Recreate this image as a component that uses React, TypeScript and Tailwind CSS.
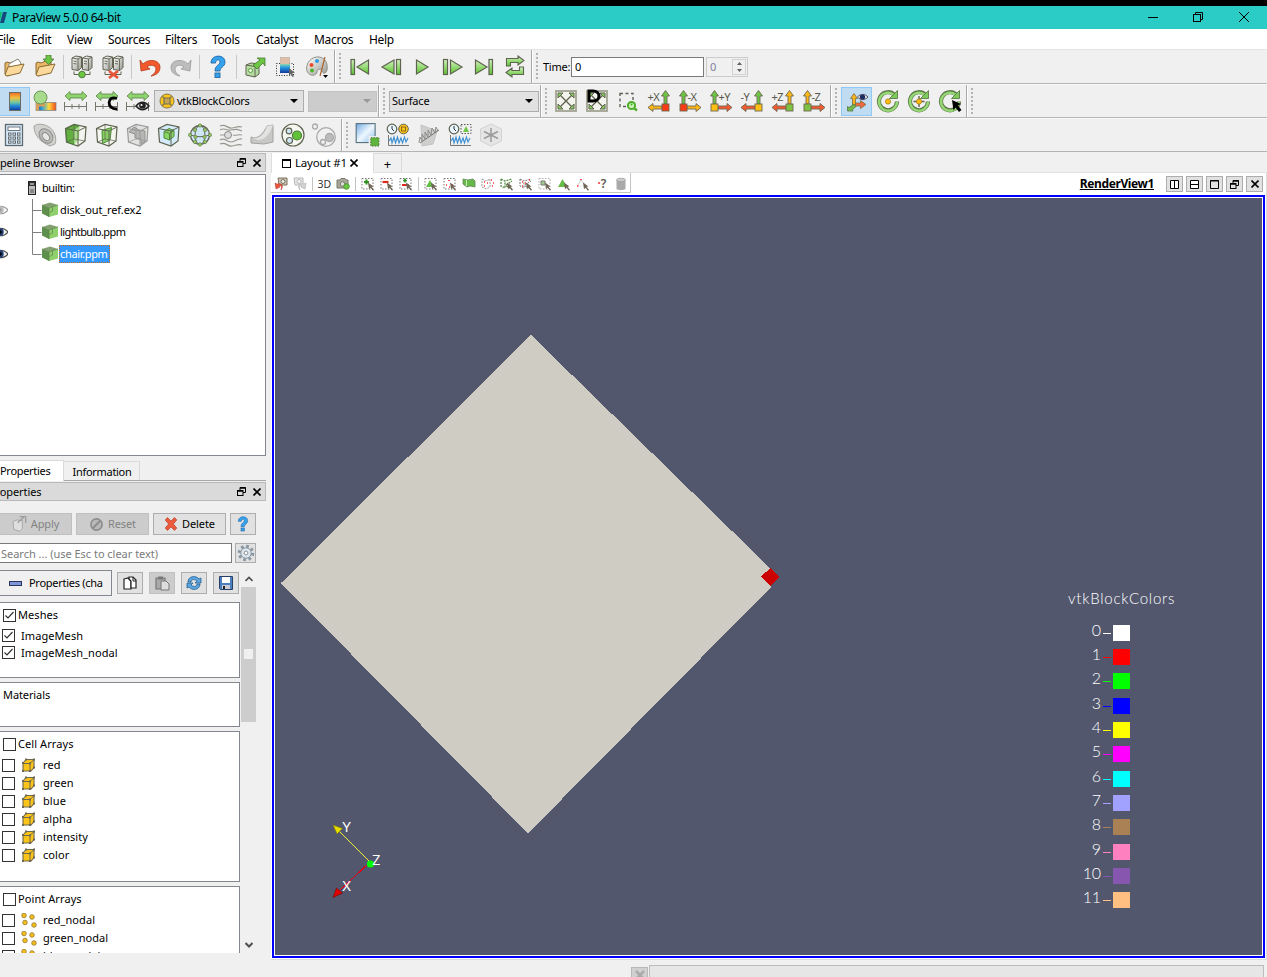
import React from "react";

type Kids = { children?: React.ReactNode };

const G = "#6cc644";
const O = "#5f6350";

function Svg({ s = 24, vb = 24, children, dim = false }: Kids & { s?: number; vb?: number; dim?: boolean }) {
  return (
    <svg width={s} height={s} viewBox={`0 0 ${vb} ${vb}`} fill="none" opacity={dim ? 0.55 : 1} className="shrink-0">
      {children}
    </svg>
  );
}

function Defs() {
  return (
    <svg width="0" height="0" className="absolute">
      <defs>
        <linearGradient id="green" x1="0" y1="0" x2="0" y2="1"><stop offset="0" stopColor="#d2f2c0" /><stop offset="1" stopColor="#5cc32f" /></linearGradient>
        <linearGradient id="metal" x1="0" y1="0" x2="1" y2="1"><stop offset="0" stopColor="#ffffff" /><stop offset="1" stopColor="#9a9a92" /></linearGradient>
        <linearGradient id="rainbow" x1="0" y1="0" x2="0" y2="1"><stop offset="0" stopColor="#f06a20" /><stop offset=".3" stopColor="#f0c040" /><stop offset=".55" stopColor="#70c8a0" /><stop offset=".75" stopColor="#1f86d8" /><stop offset="1" stopColor="#12389c" /></linearGradient>
        <linearGradient id="cool" x1="0" y1="0" x2="0" y2="1"><stop offset="0" stopColor="#8fd8b0" /><stop offset=".4" stopColor="#2496e0" /><stop offset="1" stopColor="#12389c" /></linearGradient>
        <linearGradient id="rainbowH"><stop offset="0" stopColor="#2040a0" /><stop offset=".3" stopColor="#30a0d8" /><stop offset=".65" stopColor="#ffd840" /><stop offset="1" stopColor="#f04818" /></linearGradient>
        <linearGradient id="blue" x1="0" y1="0" x2="1" y2="1"><stop offset="0" stopColor="#6fabe0" /><stop offset=".5" stopColor="#eef7ff" /><stop offset="1" stopColor="#8dbde8" /></linearGradient>
      </defs>
    </svg>
  );
}

const Slot = ({ children, on = false }: Kids & { on?: boolean }) => (
  <div className={on ? "w-[31px] h-[29px] shrink-0 flex items-center justify-center bg-[#c0dcf3] border border-[#90c8f6]" : "w-[31px] shrink-0 flex items-center justify-center"}>{children}</div>
);
const Sep = () => <div className="w-1.5 shrink-0 flex justify-center"><div className="w-px h-6 bg-[#c8c8c8]" /></div>;
const Grip = () => (
  <div className="w-[12px] self-stretch shrink-0 flex items-center">
    <div className="self-stretch w-[2px] border-l border-[#a8a8a8] bg-white" />
    <div className="ml-[3px] h-[27px] w-[2px] bg-[repeating-linear-gradient(180deg,#b4b4b4_0_2px,#f0f0f0_2px_4px)]" />
  </div>
);

/* ---------- file / edit icons ---------- */
const Folder = ({ save = false }: { save?: boolean }) => (
  <Svg>
    <path d="M3 8l2-1 3 1 7-3 3 2v5L6 21l-3-2z" fill="#e9b765" stroke="#8a6b35" />
    {!save && <path d="M7 9l9-5 3 4-2 5-10 3z" fill="#fff" stroke="#8b8b84" />}
    <path d="M3 20l3-8 16-3-4 9-13 3z" fill="#fbd99a" stroke="#8a6b35" />
    {save && <path d="M13 0h5v4h3l-5.500 5.500L10 4h3z" fill={G} stroke="#4a7a35" strokeWidth=".8" />}
  </Svg>
);
const Servers = ({ off = false }: { off?: boolean }) => (
  <Svg>
    {[2, 12.5].map((x) => (
      <g key={x}>
        <path d={`M${x} 3l4-2 5.500 1v10.500l-3 3-6.500-1z`} fill="url(#metal)" stroke={O} strokeWidth="1" />
        <path d={`M${x} 3l6 1 3.500-2M${x + 6} 4v11M${x + 1.5} 6l3 .5M${x + 1.5} 8.500l3 .5`} stroke={O} strokeWidth=".9" />
      </g>
    ))}
    <path d="M4 16.500v3h16v-3" stroke={O} />
    {off ? <path d="M8 16l9 7M17 16l-9 7" stroke="#e8553a" strokeWidth="2.600" /> : <circle cx="12" cy="19.500" r="3.300" fill={G} stroke="#4d7a3a" />}
  </Svg>
);
const Undo = ({ redo = false }: { redo?: boolean }) => (
  <Svg>
    <g transform={redo ? "translate(24 0) scale(-1 1)" : undefined}>
      <path d="M2 5l1 11 9-2-3-2c3-3 9-2 9 2 0 3-2 5-5 7 6-1 9-4 9-9 0-7-11-9-17-3z" fill={redo ? "#bdbdbd" : "#f2592c"} stroke={redo ? "#9a9a9a" : "#b43a18"} strokeWidth=".8" />
    </g>
  </Svg>
);
const Question = ({ s = 24 }: { s?: number }) => (
  <Svg s={s}>
    <path d="M5 8c0-9 14-9 14-1 0 5-5 5-5 9H9c0-6 5-6 5-9 0-3-4-3-4.500 1z" fill="#35a2ee" stroke="#2467a4" strokeWidth=".9" />
    <rect x="9" y="18" width="5" height="4.500" fill="#35a2ee" stroke="#2467a4" strokeWidth=".9" />
  </Svg>
);
const CubeArrow = () => (
  <Svg>
    <path d="M3 10l5-2 8 1v10l-4 3-9-2z" fill="#b6dba2" stroke={O} />
    <path d="M3 10l9 1.500 4-2.500M12 11.500V22" stroke={O} />
    <circle cx="7.500" cy="15.500" r="2" fill="#e8f7de" stroke="#5b9b3c" />
    <path d="M10 10l7-5-3-2h8v8l-2-3-6 6z" fill={G} stroke="#4a7a35" strokeWidth=".8" />
  </Svg>
);
const Selector = () => (
  <Svg>
    <rect x="2.500" y="8.500" width="17" height="12" stroke="#333" strokeDasharray="1 1.500" />
    <rect x="6.500" y="2.500" width="9" height="7" fill="#e0bfa8" stroke="#b8a898" strokeWidth=".6" />
    <rect x="6" y="9" width="10" height="9" fill="url(#cool)" />
    <path d="M15 13l6 5-3 .3 2 3-1.500.7-1.700-3-1.800 2z" fill="#666" />
  </Svg>
);
const Palette = () => (
  <Svg>
    <path d="M2 16C0 8 7 1 14 2c7 1 9 7 8 13-1 4-4 4-5 1s-5-2-5 1-7 6-10-1z" fill="url(#metal)" stroke="#8f8f88" />
    <circle cx="6.500" cy="10" r="2" fill="#f04a28" /><circle cx="12" cy="6" r="2" fill="#2e9be6" /><circle cx="7" cy="15.500" r="2" fill="#4db52a" />
    <path d="M20 2l-5 19" stroke="#a86432" strokeWidth="1.200" />
    <path d="M18 20h5l-2.500 3z" fill="#000" />
  </Svg>
);

/* ---------- playback ---------- */
const Play = ({ k }: { k: "first" | "prev" | "play" | "next" | "last" }) => (
  <Svg>
    <g fill="url(#green)" stroke={O} strokeWidth="1.200">
      {k === "first" && <><rect x="3" y="4.500" width="3.500" height="15" /><path d="M20.500 5v14L9 12z" /></>}
      {k === "prev" && <><rect x="17.500" y="4.500" width="4" height="15" /><path d="M15 5v14L3 12z" /></>}
      {k === "play" && <path d="M6.500 5v14l11.500-7z" />}
      {k === "next" && <><rect x="2.500" y="4.500" width="4" height="15" /><path d="M9.500 5v14l11.500-7z" /></>}
      {k === "last" && <><rect x="17" y="4.500" width="3.500" height="15" /><path d="M3.500 5v14L15 12z" /></>}
    </g>
  </Svg>
);
const Loop = () => (
  <Svg>
    <g fill="url(#green)" stroke={O} strokeWidth="1.100">
      <path d="M3.500 11V3.500H15V1l6 4.500-6 4.500V7.500H7.500V11z" />
      <path d="M20.500 12v7.500H9V22l-6-4.500L9 13v2.500h7.500V12z" />
    </g>
  </Svg>
);

/* ---------- color toolbar ---------- */
const ColorBar = () => <Svg><rect x="6.500" y="3.500" width="11" height="18" fill="url(#rainbow)" stroke="#6c6c64" /></Svg>;
const EditMap = () => (
  <Svg>
    <rect x="3" y="13.500" width="20" height="8" fill="url(#rainbowH)" stroke="#8c8c84" strokeWidth=".8" />
    <path d="M3 21.500v-8h9v4H6v4z" fill="#d6a05a" />
    <circle cx="7.500" cy="8.500" r="6.500" fill="#a8dc8c" stroke="#6a9658" />
  </Svg>
);
const Rescale = ({ k }: { k?: "c" | "eye" }) => (
  <Svg>
    <path d="M1 7l5-4.500V5h12V2.500L23 7l-5 4.500V9H6v2.500z" fill="#8ed46c" stroke="#638a50" strokeWidth=".9" />
    <path d="M.500 13v9M22.500 13v9M.500 17.500h22M8 15v5M15 15v5" stroke="#76766c" />
    {k === "c" && <path d="M22 9.500c-10-4-11 11 0 10.500" stroke="#000" strokeWidth="2.800" />}
    {k === "eye" && <><path d="M10 17c4-5 9-5 13 0-4 5-9 5-13 0z" fill="#ddd" stroke="#222" strokeWidth="1.400" /><circle cx="16.500" cy="16.500" r="3.300" fill="#222" /><circle cx="15.500" cy="16" r="1" fill="#fff" /></>}
  </Svg>
);
const BlockDot = ({ s = 16 }: { s?: number }) => (
  <Svg s={s} vb={16}>
    <circle cx="8" cy="8" r="7" fill="#fcc419" stroke="#857747" />
    <path d="M5 5h6v6H5zM3.500 3.500L5 5M12.500 3.500L11 5M3.500 12.500L5 11M12.500 12.500L11 11" fill="#c5a457" stroke="#70705a" strokeWidth="1.200" />
  </Svg>
);

/* ---------- camera ---------- */
const Expand = ({ d = false }: { d?: boolean }) => (
  <Svg>
    <rect x="2" y="2" width="20" height="20" fill="#f4f4ee" stroke="#a3a393" strokeWidth="1.800" />
    <path d="M6 6l12 12M18 6L6 18" stroke={O} strokeWidth="1.400" />
    <path d="M4 9V4h5zM15 4h5v5zM4 15v5h5zM20 15v5h-5z" fill="#83cf5e" stroke={O} />
    {d && <path d="M4 2h4c8 0 8 10 0 10H4z" stroke="#000" strokeWidth="3" />}
  </Svg>
);
const ZoomBox = () => (
  <Svg>
    <rect x="4" y="4.500" width="13" height="13" stroke="#5e6054" strokeWidth="1.400" strokeDasharray="3 2.500" />
    <circle cx="15.500" cy="16.500" r="3.600" fill="#c9f0b6" stroke="#4fae2c" strokeWidth="2" /><circle cx="15.500" cy="15.500" r="1" fill="#4fae2c" /><path d="M18 19l3 2.500" stroke="#4fae2c" strokeWidth="2.400" />
  </Svg>
);
function Axis({ label, right, up, side, box }: { label: string; right?: boolean; up: string; side: string; box: string }) {
  return (
    <div className="relative flex">
      <Svg>
        <g transform={right ? "translate(24 0) scale(-1 1)" : undefined} stroke="#6d6650" strokeWidth=".9">
          <path d="M18.500 1.500l4 5.500H20V15h-3V7h-2.500z" fill={up} />
          <path d="M1 18.500l5-4V17h9v3H6v2.500z" fill={side} />
          <rect x="15" y="15" width="7" height="7" fill={box} />
        </g>
      </Svg>
      <span className={right ? "absolute left-[10px] top-[3px] text-[11px] leading-[10px] tracking-[-0.6px] text-[#55584a]" : "absolute left-[1px] top-[3px] text-[11px] leading-[10px] tracking-[-0.6px] text-[#55584a]"}>{label}</span>
    </div>
  );
}
const Eye = ({ dim = false, s = 16 }: { dim?: boolean; s?: number }) => (
  <Svg s={s} vb={16} dim={dim}>
    <path d="M0 8c4-5 12-5 16 0-4 5-12 5-16 0z" fill="#eee" stroke="#444" strokeWidth="1.200" />
    <circle cx="8" cy="8" r="3.700" fill={dim ? "#888" : "#1f3c74"} /><circle cx="8" cy="8" r="1.800" fill={dim ? "#555" : "#000"} />
  </Svg>
);
const Orient = () => (
  <Svg>
    <g stroke="#7e6d48" strokeWidth=".8">
      <path d="M10 14h5.500v-2.500l5.500 4-5.500 4V17H10z" fill="#f26a3c" />
      <path d="M7.500 16V9.500H5.500L9 4.500l3.500 5h-2V16z" fill="#f8b21c" />
      <path d="M9 15l2 2.500-3.500 3 .5 1.500H2.500v-4.500l1.500 1z" fill="#72b94c" stroke="#5a7a44" />
    </g>
    <path d="M12.500 8c3-3.500 7.500-3.500 10.500 0-3 3.500-7.500 3.500-10.500 0z" fill="#ddd" stroke="#556" /><circle cx="17.500" cy="8" r="2.600" fill="#1c2b60" />
  </Svg>
);
const Rotate = ({ k }: { k: "dot" | "cross" | "cursor" }) => (
  <Svg>
    <path d="M18.500 6A9 9 0 1 0 21 12.500" stroke="#617a4c" strokeWidth="4.200" />
    <path d="M18 6A9 9 0 1 0 21 13" stroke="#94d974" strokeWidth="2.400" />
    <path d="M21.500 1.500v8h-8z" fill="#7dcb58" stroke="#617a4c" strokeWidth=".9" />
    {k === "cross" && <path d="M12 7v11M6.500 12.500h11" stroke={O} strokeWidth="1.400" />}
    {k !== "cursor" && <circle cx="12" cy="12.500" r="2.600" fill="#ffbf12" stroke="#a87a18" strokeWidth=".8" />}
    {k === "cursor" && <path d="M14 11l9 4-3 1.500 3.500 4.500-2.500 2-3.500-4.500-2 3z" fill="#000" />}
  </Svg>
);

/* ---------- filters ---------- */
const Calc = () => (
  <Svg>
    <rect x="3.500" y="1.500" width="17" height="21" fill="#d7e9f8" stroke="#5e6a70" strokeWidth="1.300" />
    <rect x="6" y="4" width="12" height="3.500" fill="#fff" stroke="#6c7880" />
    {[10, 14, 18].map((y) => [6.5, 11, 15.5].map((x) => <rect key={`${x}-${y}`} x={x} y={y} width="2.500" height="2.200" fill="#fff" stroke="#5e6a70" />))}
  </Svg>
);
const Contour = () => (
  <Svg>
    <path d="M1 3c4-3 10-2 15 1 6 4 8 11 6 17l-5 2C8 19 1 13 1 3z" fill="#d2d2d0" stroke="#a4a4a0" />
    <ellipse cx="13" cy="13" rx="8" ry="6" transform="rotate(50 13 13)" fill="#bcbcba" stroke="#8e8e8a" /><ellipse cx="13.500" cy="13.500" rx="4.500" ry="3" transform="rotate(50 13 13)" fill="#e8e8e8" stroke="#8e8e8a" />
  </Svg>
);
function Box({ k }: { k: "clip" | "slice" | "thr" | "sub" }) {
  const gray = k === "thr";
  return (
    <Svg>
      <path d="M1.500 5.500L10 1.500l12 2.500-1 14-7 5-11.500-4z" fill={gray ? "#e2e2e0" : k === "sub" ? "#d4ebfb" : "#f2f6ee"} stroke={gray ? "#999" : O} strokeWidth="1.200" />
      {k === "clip" && <><path d="M2 6l8-4 5 1-5.500 4.500L10 21.500 3 19z" fill="#62b040" stroke="#4d7c3a" /><path d="M9.500 7.500l6-4.500-.5 13.500-5 5z" fill="#a6de8a" /></>}
      {k === "slice" && <path d="M7 7.500L16.500 4.500l-1.500 12.500-7.500 3.500z" fill="#86d062" stroke="#4d8a38" />}
      {k === "thr" && <path d="M3 9l6 2v4l6 1v5l4-3V8l-6-1-5-3z" fill="#b6b6b4" stroke="#939390" />}
      {k === "sub" && <><path d="M7 8.500l5-3 5 2v6L12.500 17 7 15z" fill="#8bd567" stroke="#4d8a38" /><path d="M7 8.500l5.500 2L17 7.500M12.500 10.500V17" stroke="#4d8a38" /></>}
      <path d="M1.500 5.500L14 8l8-4M14 8v15" stroke={gray ? "#999" : O} strokeWidth="1" />
      {k !== "sub" && <path d="M10 1.500V16M2.500 19l7.500-3 11 2" stroke={gray ? "#999" : O} strokeWidth=".7" />}
    </Svg>
  );
}
const Globe = () => (
  <Svg>
    <circle cx="12" cy="12" r="9.500" fill="#cfe6f6" stroke={O} strokeWidth="1.300" /><ellipse cx="12" cy="12" rx="5" ry="9.500" stroke={O} /><path d="M2.500 12q9.500 3.500 19 0" stroke={O} />
    {[[12, 2.5], [12, 21.5], [2, 12], [22, 12], [7, 7], [17, 7], [7.5, 14], [16.500, 14], [7, 19], [17, 19]].map(([x, y]) => <circle key={`${x}_${y}`} cx={x} cy={y} r="1.700" fill="#8ecb58" stroke={O} strokeWidth=".5" />)}
  </Svg>
);
const Stream = () => (
  <Svg>
    <path d="M1 3c6-3 7 3 12 2s6-2 10-1M1 7c5-3 6 1 11 0s6-1 11 1M1 21c6-3 7 3 12 2s6-2 10-1M1 17c5-3 6 2 11 2s6-4 11-3M1 12h4M14 12c3 1 5-1 9 0" stroke="#979791" strokeWidth="1.200" /><circle cx="9" cy="12" r="3.500" fill="#ddd" stroke="#888" />
  </Svg>
);
const Warp = () => <Svg><path d="M1 14c7 3 12-3 16-11l6-1v17l-9 2-13-1z" fill="#c8c8c6" stroke="#a2a29e" /><path d="M1 14c8 3 13-2 16-11l6-1c-4 12-10 15-15 15z" fill="#e2e2e0" /></Svg>;
const Group = ({ dim = false }: { dim?: boolean }) => (
  <Svg>
    {dim ? <g stroke="#aaa" strokeWidth="1.300"><circle cx="14" cy="14" r="9.300" /><circle cx="17.500" cy="14.500" r="4" fill="#bbb" /><circle cx="11" cy="19" r="2.500" /><circle cx="3" cy="3.500" r="2.500" fill="#f0f0f0" /><circle cx="10.500" cy="10" r="0" /></g>
      : <g stroke={O} strokeWidth="1.200"><circle cx="12" cy="12" r="11" fill="#f4f6f0" /><circle cx="16" cy="12.500" r="4.500" fill="#61c338" stroke="#4b7c38" /><circle cx="8" cy="8" r="2.800" fill="#cfe6f6" /><circle cx="8.500" cy="17.500" r="3" fill="#cfe6f6" /></g>}
  </Svg>
);
const SelBox = () => <Svg s={26}><rect x="2" y="1.500" width="17.500" height="17.500" fill="url(#blue)" stroke="#556f7a" /><rect x="13.500" y="13" width="10.500" height="11" fill="#f0f0f0" /><rect x="15.500" y="14.500" width="7.500" height="7.500" fill="#5fb53b" stroke="#4d7c3a" strokeDasharray="1.500 1" /></Svg>;
const Plot = ({ k }: { k: "dot" | "sel" }) => (
  <Svg>
    <circle cx="6" cy="6" r="4.800" fill="#e9f5ff" stroke={O} strokeWidth="1.200" /><path d="M6 3v3l2 2" stroke="#333" />
    {k === "dot" ? <g><circle cx="17.500" cy="6" r="4.800" fill="#fcc419" stroke={O} /><rect x="15.500" y="4" width="4" height="4" stroke="#8a6a1a" /></g> : <g><rect x="13" y="1.500" width="10" height="9" stroke="#555" strokeDasharray="1.500 1.500" /><path d="M18 3l3 6h-6z" fill={G} /></g>}
    <path d="M2.500 12v10.500H23" stroke="#777" />
    <path d="M3 18l2-3 1 5 2-6 1.500 6 2-6 1.500 6 2-5 1.500 5 2-6 1.500 5 2-4" stroke="#3c8fd2" strokeWidth="1.100" />
  </Svg>
);
const PlotLine = () => <Svg><path d="M4 2l16 6-4 13-11 2z" fill="#cfcfcd" stroke="#c4c4c2" /><path d="M2 20l1-6 2 4 0-7 3 5 0-7 3 5 0-7 3 5 1-7 3 5 1-6 2 4" stroke="#8c8c8a" /><path d="M3 20L22 7" stroke="#777" /></Svg>;
const Probe = () => <Svg dim><path d="M12 1l10.500 5v12L12 23 1.500 18V6z" fill="#ddd" stroke="#bbb" /><path d="M12 5v14M5 8.500l14 7M19 8.500l-14 7" stroke="#555" strokeWidth="1.500" /></Svg>;

/* ---------- small view icons ---------- */
const Mini = ({ children }: Kids) => <div className="w-[19px] shrink-0 flex justify-center"><Svg s={14} vb={14}>{children}</Svg></div>;
const MiniSep = () => <div className="w-1.5 shrink-0 flex justify-center"><div className="w-px h-3.5 bg-[#c4c4c4]" /></div>;
const Cur = () => <path d="M7 5.500l5.500 4-2 .3 2.500 3-1 1-2.500-3-1.500 1.500z" fill="#6f6555" />;
const Dash = ({ c = "#777" }: { c?: string }) => <rect x="1" y="1.500" width="11" height="10.500" stroke={c} strokeDasharray="1.500 1.500" />;

/* ---------- window buttons ---------- */
const Restore = ({ s = 9 }: { s?: number }) => <svg width={s} height={s} viewBox="0 0 9 9" fill="none" stroke="#000"><path d="M3 3V.500h5.500v5H6" /><path d="M3 1h5.500M.500 4H6" strokeWidth="1.400" /><rect x=".5" y="3.500" width="5.500" height="5" /></svg>;
const Close = ({ s = 8 }: { s?: number }) => <svg width={s} height={s} viewBox="0 0 8 8" fill="none" stroke="#000" strokeWidth="1.600"><path d="M.500.500l7 7M7.500.500l-7 7" /></svg>;

const DockTitle = ({ children }: Kids) => (
  <div className="h-[19px] w-[266px] flex items-center bg-[#dadada] border border-l-0 border-[#b9b9b9] shrink-0">
    <div className="flex-1 flex">{children}</div>
    <Restore /><div className="w-[7px]" /><Close /><div className="w-1" />
  </div>
);

const Caret = ({ c = "#000" }: { c?: string }) => <svg width="8" height="4" viewBox="0 0 8 4"><path d="M0 0h8L4 4z" fill={c} /></svg>;

const Check = ({ on = false }: { on?: boolean }) => (
  <svg width="13" height="13" viewBox="0 0 13 13" fill="none" className="shrink-0"><rect x=".5" y=".5" width="12" height="12" fill="#fff" stroke="#333" />{on && <path d="M2.500 6.500L5 9l5.500-6" stroke="#333" strokeWidth="1.200" />}</svg>
);
const CellIcon = () => (
  <svg width="15" height="15" viewBox="0 0 15 15" className="shrink-0"><path d="M2 5l3-3.500h8v8L10 13H2z" fill="#fcc419" stroke="#6e6850" strokeWidth="1.100" /><path d="M2 5.500h7V13M9 5.500l4-4" stroke="#6e6850" fill="none" /><path d="M1 4h2v2H1zM8 4.500h2v2H8zM1 12h2v2H1zM8 12h2v2H8zM4 .5h2v2H4zM12 .5h2v2h-2zM12 8.500h2v2h-2z" fill="#6e6850" /></svg>
);
const PointIcon = () => (
  <svg width="17" height="15" viewBox="0 0 17 15" className="shrink-0" fill="#f4bd1c" stroke="#927a34" strokeWidth=".8"><circle cx="3" cy="2.500" r="2.300" /><circle cx="11" cy="4" r="2.300" /><circle cx="4" cy="9.500" r="2.300" /><circle cx="13" cy="12" r="2.300" /></svg>
);

const menus: [string, string][] = [["File", "w-[34px]"], ["Edit", "w-[36px]"], ["View", "w-[41px]"], ["Sources", "w-[57px]"], ["Filters", "w-[47px]"], ["Tools", "w-[44px]"], ["Catalyst", "w-[58px]"], ["Macros", "w-[55px]"], ["Help", "w-[40px]"]];
const legend = ["#ffffff", "#ff0000", "#00ff00", "#0000ff", "#ffff00", "#ff00ff", "#00ffff", "#a1a1ff", "#aa8055", "#ff80bf", "#8757b0", "#ffbf80"];
const sources = ["disk_out_ref.ex2", "lightbulb.ppm", "chair.ppm"];

const Btn = ({ children, off = false, cls }: Kids & { off?: boolean; cls: string }) => (
  <div className={`${cls} shrink-0 flex items-center justify-center border ${off ? "bg-[#cccccc] border-[#c0c0c0] text-[#838383]" : "bg-[#e1e1e1] border-[#adadad]"}`}>{children}</div>
);

const ViewBtn = ({ children }: Kids) => <div className="w-[17px] h-4 bg-[#e1e1e1] border border-[#adadad] flex items-center justify-center">{children}</div>;

function Row({ icon, name }: { icon: React.ReactNode; name: string }) {
  return <div className="h-[18px] flex items-center pl-0.5"><Check /><div className="w-7 pl-1.5">{icon}</div><span>{name}</span></div>;
}

export default function App() {
  return (
    <div className="w-[1267px] h-[977px] overflow-hidden bg-[#f0f0f0] flex flex-col text-black whitespace-nowrap text-[11px] leading-[14px] font-['Noto_Sans',sans-serif] tracking-[-0.1px]">
      <Defs />
      <div className="h-1.5 bg-black shrink-0" />
      <div className="h-[23px] shrink-0 bg-[#2accc5] flex items-center text-[12px] tracking-[-0.42px]">
        <svg width="7" height="11" viewBox="0 0 7 11"><path d="M0 0h2L0 9z" fill="#1b6" /><path d="M3 0h4L4 11H0z" fill="#174a7c" /></svg>
        <span className="ml-[5px] flex-1">ParaView 5.0.0 64-bit</span>
        <svg width="10" height="10" className="mr-[35px]"><path d="M0 4.500h10" stroke="#000" /></svg>
        <svg width="10" height="10" fill="none" stroke="#000" className="mr-9 -mt-0.5"><path d="M2.500 2V.500h7v7H8" /><rect x=".5" y="2.500" width="7" height="7" /></svg>
        <svg width="10" height="10" stroke="#000" className="mr-[18px] -mt-0.5"><path d="M0 0l10 10M10 0L0 10" /></svg>
      </div>
      <div className="h-5 shrink-0 bg-white flex items-center text-[12px] tracking-[-0.3px]">
        <div className="-ml-[3px] mt-px flex">{menus.map(([m, w]) => <span key={m} className={w}>{m}</span>)}</div>
      </div>

      <div className="h-[35px] shrink-0 border-t border-t-[#e4e4e4] border-b border-b-[#b4b4b4] flex items-center">
        <div className="w-0 -ml-0.5" />
        <Slot><Folder /></Slot><Slot><Folder save /></Slot><Sep />
        <Slot><Servers /></Slot><Slot><Servers off /></Slot><Sep />
        <Slot><Undo /></Slot><Slot><Undo redo /></Slot><Sep />
        <Slot><Question /></Slot><Sep />
        <Slot><CubeArrow /></Slot><Slot><Selector /></Slot><Slot><Palette /></Slot>
        <div className="w-0.5" /><Grip />
        <div className="-ml-[2px]" />
        <Slot><Play k="first" /></Slot><Slot><Play k="prev" /></Slot><Slot><Play k="play" /></Slot><Slot><Play k="next" /></Slot><Slot><Play k="last" /></Slot><Slot><Loop /></Slot>
        <div className="w-px" /><Grip />
        <span className="w-[28px] tracking-[-0.25px]">Time:</span>
        <div className="w-[133px] h-5 bg-white border border-[#7a7a7a] flex items-center pl-[3px] pt-px">0</div>
        <div className="ml-0.5 w-[42px] h-5 border border-[#cccccc] flex items-center text-[#7f7f9f] pl-[3px] pr-px">
          <span className="flex-1 pt-px">0</span>
          <div className="w-[14px] h-4 border border-[#d2d2d2] flex flex-col items-center justify-center gap-1">
            <svg width="5" height="3"><path d="M0 3h5L2.500 0z" fill="#606060" /></svg><svg width="5" height="3"><path d="M0 0h5L2.500 3z" fill="#606060" /></svg>
          </div>
        </div>
      </div>

      <div className="h-[34px] shrink-0 border-t border-t-[#fafafa] border-b border-b-[#b4b4b4] flex items-center">
        <div className="-ml-px" />
        <Slot on><ColorBar /></Slot><div className="-ml-px" /><Slot><EditMap /></Slot><Slot><Rescale /></Slot><Slot><Rescale k="c" /></Slot><Slot><Rescale k="eye" /></Slot><div className="ml-px" />
        <div className="w-[150px] h-[22px] bg-[#e1e1e1] border border-[#adadad] flex items-center pl-1 pr-[5px]"><BlockDot /><span className="ml-0.5 flex-1 tracking-[-0.25px]">vtkBlockColors</span><Caret /></div>
        <div className="ml-1 w-[69px] h-[21px] bg-[#cccccc] border border-[#c2c2c2] flex items-center justify-end pr-[5px]"><Caret c="#999" /></div>
        <div className="w-px" /><Grip /><div className="-ml-px" />
        <div className="w-[150px] h-[21px] bg-[#e1e1e1] border border-[#adadad] flex items-center pl-[2px] pr-[5px]"><span className="flex-1 tracking-[-0.2px]">Surface</span><Caret /></div>
        <div className="w-px" /><Grip /><div className="-ml-[2px]" />
        <Slot><Expand /></Slot><Slot><Expand d /></Slot><Slot><ZoomBox /></Slot>
        <Slot><Axis label="+X" up={G} side="#fcb717" box="#fb3b14" /></Slot><Slot><Axis label="-X" right up={G} side="#fcb717" box="#fb3b14" /></Slot>
        <Slot><Axis label="+Y" right up={G} side="#f65a30" box="#fdbf14" /></Slot><Slot><Axis label="-Y" up={G} side="#f65a30" box="#fdbf14" /></Slot>
        <Slot><Axis label="+Z" up="#fcb717" side="#f65a30" box="#7fc243" /></Slot><Slot><Axis label="-Z" right up="#fcb717" side="#f65a30" box="#7fc243" /></Slot>
        <div className="w-px" /><Grip /><div className="-ml-px" />
        <Slot on><Orient /></Slot><Slot><Rotate k="dot" /></Slot><Slot><Rotate k="cross" /></Slot><Slot><Rotate k="cursor" /></Slot>
        <div className="w-px" /><Grip />
      </div>

      <div className="h-[34px] shrink-0 border-t border-t-[#fafafa] border-b border-b-[#b4b4b4] flex items-center">
        <div className="-ml-[2px]" />
        <Slot><Calc /></Slot><Slot><Contour /></Slot><Slot><Box k="clip" /></Slot><Slot><Box k="slice" /></Slot><Slot><Box k="thr" /></Slot><Slot><Box k="sub" /></Slot><Slot><Globe /></Slot><Slot><Stream /></Slot><Slot><Warp /></Slot><Slot><Group /></Slot><Slot><Group dim /></Slot>
        <div className="w-0.5" /><Grip /><div className="-ml-[2px]" />
        <Slot><SelBox /></Slot><Slot><Plot k="dot" /></Slot><Slot><PlotLine /></Slot><Slot><Plot k="sel" /></Slot><Slot><Probe /></Slot>
      </div>

      <div className="flex h-[808px] shrink-0">
        <div className="w-[271px] shrink-0 flex flex-col pt-px overflow-hidden">
          <DockTitle><span className="-ml-[9px] tracking-[-0.22px]">Pipeline Browser</span></DockTitle>
          <div className="mt-0.5 h-[282px] w-[266px] shrink-0 bg-white border border-l-0 border-[#828790] flex flex-col">
            <div className="h-[24px] flex items-center pl-[28px]">
              <svg width="8" height="14" viewBox="0 0 8 14" className="mt-px"><rect x=".5" y=".5" width="7" height="13" fill="#bbb" stroke="#222" /><path d="M1 1h6v4H1z" fill="#333" /><path d="M2 3h4" stroke="#fff" /><path d="M2 8h4v4H2z" fill="#888" /></svg>
              <span className="ml-1.5 mt-0.5 tracking-[-0.4px]">builtin:</span>
            </div>
            {sources.map((s, i) => (
              <div key={s} className="h-[22px] flex items-center">
                <div className="-ml-2 w-4"><Eye dim={i === 0} /></div>
                <svg width="10" height="22" className="ml-6" fill="none" stroke="#808080"><path d={i === 2 ? "M.500 0v11.500h9" : "M.500 0v22M.500 11.500h9"} /></svg>
                <svg width="16" height="16" viewBox="0 0 16 16"><path d="M0 3l7 3v9l-7-3.500z" fill="#5f8f4c" /><path d="M0 3L8 .5l8 2.500-9 3z" fill="#83a070" /><path d="M7 6l9-3v9.500L7 15z" fill="#8fcf6c" /><path d="M7 6l9-3M7 6v9M7 6L0 3M7.500 10.500l3-1.500V5" stroke="#5a7f48" strokeWidth=".7" fill="none" /></svg>
                {i === 2 ? <span className="ml-px h-[18px] w-[51px] pl-px bg-[#3399ff] text-white outline-1 -outline-offset-1 outline-dotted outline-[#c86a20] leading-[17px] tracking-[-0.35px]">{s}</span> : <span className={i === 0 ? "ml-0.5" : "ml-0.5 tracking-[-0.6px]"}>{s}</span>}
              </div>
            ))}
          </div>
          <div className="mt-1 h-[21px] w-[266px] shrink-0 flex items-end border-b border-[#a8a8a8]">
            <div className="w-[64px] h-[21px] -mb-px bg-white border-r border-t border-[#d9d9d9] flex items-center tracking-[-0.3px]">Properties</div>
            <div className="w-[76px] h-[19px] border border-l-0 border-b-0 border-[#d9d9d9] flex items-center justify-center pt-0.5 tracking-[-0.3px]"><span className="ml-px">Information</span></div>
          </div>
          <div className="h-px shrink-0" />
          <DockTitle><span className="-ml-[11px]">Properties</span></DockTitle>
          <div className="h-3 shrink-0" />
          <div className="h-[22px] flex shrink-0">
            <Btn off cls="w-[74px] h-[22px] -ml-0.5 gap-1"><Svg s={16} dim><path d="M3 8l6-2 8 1v12l-4 4-9-3z" fill="#eee" stroke="#666" /><path d="M10 10l9-8M13 1h9v9" stroke="#777" strokeWidth="2" /></Svg>Apply</Btn>
            <Btn off cls="w-[73px] h-[22px] ml-1 gap-1"><Svg s={15}><circle cx="12" cy="12" r="9" fill="#b9b9b9" stroke="#8c8c8c" strokeWidth="2.500" /><path d="M6 18L18 6" stroke="#8c8c8c" strokeWidth="3" /></Svg>Reset</Btn>
            <Btn cls="w-[73px] h-[22px] ml-1 gap-1"><Svg s={14}><path d="M2 5l4-4 6 6 6-6 4 4-6 7 6 7-4 4-6-6-6 6-4-4 6-7z" fill="#ef5a3a" stroke="#a83420" /></Svg>Delete</Btn>
            <Btn cls="w-[26px] h-[22px] ml-1"><Question s={16} /></Btn>
          </div>
          <div className="mt-2 h-5 flex shrink-0">
            <div className="w-[232px] bg-white border border-l-0 border-[#7a7a7a] flex items-center pl-px pt-0.5 text-[#7b7b7b] tracking-[-0.02px]">Search ... (use Esc to clear text)</div>
            <Btn cls="w-[21px] h-5 ml-[3px]"><Svg s={18}><circle cx="12" cy="12" r="9" stroke="#8795a0" strokeWidth="4" strokeDasharray="3.500 3.570" /><circle cx="12" cy="12" r="7" fill="#dde5ea" stroke="#8795a0" strokeWidth="1.300" /><circle cx="12" cy="12" r="2.500" fill="#fff" stroke="#8795a0" strokeWidth="1.300" /></Svg></Btn>
          </div>
          <div className="mt-[7px] h-[383px] flex shrink-0 overflow-hidden">
            <div className="w-[241px] flex flex-col">
              <div className="h-[26px] shrink-0 flex items-center">
                <div className="w-[112px] h-[26px] border border-l-0 border-[#828790] flex items-center pl-[9px]"><div className="w-[13px] h-[5px] bg-[#8095d8] border border-[#28365f]" /><span className="ml-[7px] tracking-[-0.28px]">Properties (cha</span></div>
                <Btn cls="ml-[5px] w-[26px] h-[22px]"><Svg s={16} vb={16}><path d="M2 4l4-1 3 3v8H2z" fill="#fff" stroke="#222" strokeWidth="1.200" /><path d="M7 2h4l3 3v8h-5V6L7 4z" fill="#fff" stroke="#222" strokeWidth="1.200" /><path d="M11 2v4h3" stroke="#222" /></Svg></Btn>
                <Btn off cls="ml-1.5 w-[26px] h-[22px]"><Svg s={16} vb={16}><path d="M2 3h9v11H2z" fill="#aaa" stroke="#777" strokeWidth="1.200" /><path d="M4 1.500h5v3H4z" fill="#777" /><path d="M7 6h5l3 3v6H7z" fill="#ddd" stroke="#777" /></Svg></Btn>
                <Btn cls="ml-1.5 w-[26px] h-[22px]"><Svg s={16} vb={16}><path d="M2 7c0-6 8-7 11-3l2-1v5h-6l2-2C9 4 5 4 5 7zM14 9c0 6-8 7-11 3l-2 1V8h6l-2 2c2 2 6 2 6-1z" fill="#5aa6e2" stroke="#2a608f" strokeWidth=".8" /></Svg></Btn>
                <Btn cls="ml-1.5 w-[26px] h-[22px]"><Svg s={16} vb={16}><path d="M1.500 1.500h13v13h-12l-1-1z" fill="#4a7fc0" stroke="#283f66" /><path d="M4 2h8v6H4z" fill="#fff" /><path d="M4 10h8v4H4z" fill="#c9ccd2" /><path d="M5 11h2v3H5z" fill="#222" /></Svg></Btn>
              </div>
              <div className="mt-1.5 w-[240px] h-[76px] shrink-0 bg-white border border-l-0 border-[#828790] tracking-[0.08px]">
                <div className="h-[24px] flex items-center pl-[3px] gap-0.5"><Check on />Meshes</div>
                <div className="h-[17px] flex items-center pl-0.5 gap-1.5"><Check on />ImageMesh</div>
                <div className="h-[17px] flex items-center pl-0.5 gap-1.5"><Check on />ImageMesh_nodal</div>
              </div>
              <div className="mt-1 w-[240px] h-[45px] shrink-0 bg-white border border-l-0 border-[#828790] pl-[3px] pt-[5px]">Materials</div>
              <div className="mt-1 w-[240px] h-[151px] shrink-0 bg-white border border-l-0 border-[#828790] tracking-[0.08px]">
                <div className="h-[24px] flex items-center pl-[3px] gap-0.5"><Check />Cell Arrays</div>
                {["red", "green", "blue", "alpha", "intensity", "color"].map((n) => <Row key={n} name={n} icon={<CellIcon />} />)}
              </div>
              <div className="mt-1 w-[240px] h-[100px] shrink-0 bg-white border border-l-0 border-[#828790] tracking-[0.08px]">
                <div className="h-[24px] flex items-center pl-[3px] gap-0.5"><Check />Point Arrays</div>
                {["red_nodal", "green_nodal", "blue_nodal"].map((n) => <Row key={n} name={n} icon={<PointIcon />} />)}
              </div>
            </div>
            <div className="w-[15px] flex flex-col items-center">
              <div className="h-[17px] flex items-center"><svg width="8" height="6" fill="none" stroke="#505050" strokeWidth="1.600"><path d="M.500 5L4 1.500 7.500 5" /></svg></div>
              <div className="h-[135px] w-[15px] bg-[#cdcdcd] flex items-center justify-center"><div className="w-[9px] h-2.5 -mt-px bg-[#f0f0f0]" /></div>
              <div className="flex-1" />
              <div className="h-[17px] flex items-center"><svg width="8" height="6" fill="none" stroke="#505050" strokeWidth="2"><path d="M.500 1L4 4.500 7.500 1" /></svg></div>
            </div>
          </div>
        </div>

        <div className="w-[996px] flex flex-col">
          <div className="h-[21px] flex items-end shrink-0 border-b border-[#e2e2e2]">
            <div className="w-[103px] h-5 -mb-px bg-white border-x border-[#dedede] flex items-center pl-2.5 text-[11.500px]">
              <svg width="9" height="9" fill="none" stroke="#000"><rect x=".5" y=".5" width="8" height="8" /><path d="M0 1h9" strokeWidth="2" /></svg><span className="ml-1 mr-[3px] tracking-[-0.2px]">Layout #1</span><Close />
            </div>
            <div className="w-[28px] h-[19px] border border-l-0 border-b-0 border-[#d9d9d9] flex items-center justify-center text-[13px] pt-0.5">+</div>
          </div>
          <div className="flex-1 bg-white border-r border-b border-[#dcdcdc] pl-px flex flex-col">
            <div className="h-[22px] shrink-0 flex items-start">
              <div className="w-[360px] h-5 pt-[3px] border-r border-b border-[#c4c4c4] flex items-center -ml-px">
                <Mini><path d="M4 1h9v7H5z" fill="#c9c5b6" stroke="#7c715b" /><circle cx="9" cy="4.500" r="2" fill="#eee" stroke="#7c715b" /><path d="M1 6l1 6 4-2-1-1c2-1 3 0 2 4 3-4 1-7-4-6z" fill="#ea5637" stroke="#a33" strokeWidth=".5" /></Mini>
                <Mini><g opacity=".5"><path d="M1 1h9v7H2z" fill="#ccc" stroke="#777" /><circle cx="6" cy="4.500" r="2" fill="#eee" stroke="#777" /><path d="M13 6l-1 6-4-2 1-1c-2-1-3 0-2 4-3-4-1-7 4-6z" fill="#aaa" stroke="#888" /></g></Mini>
                <MiniSep />
                <div className="w-[19px] text-center text-[10.500px] text-[#333] tracking-normal">3D</div>
                <Mini><path d="M1 3h3l1-1.500h4L10 3h2v8H1z" fill="#a9a99b" stroke="#77776a" /><circle cx="6.500" cy="7" r="2.300" fill="#ddd" stroke="#77776a" /><circle cx="10.500" cy="9.500" r="2.800" fill="#6cc644" stroke="#4d9a35" /></Mini>
                <MiniSep />
                <Mini><Dash /><path d="M5.500 2.500v5M3 5h5" stroke="#319221" strokeWidth="2" /><Cur /></Mini>
                <Mini><Dash /><path d="M2.500 5h6" stroke="#e02a20" strokeWidth="2.200" /><Cur /></Mini>
                <Mini><Dash /><path d="M6 1.500v4M4 3.500h4" stroke="#319221" strokeWidth="1.600" /><path d="M3 8h7" stroke="#e02a20" strokeWidth="2" /><Cur /></Mini>
                <MiniSep />
                <Mini><Dash /><path d="M6 3l4 7H2z" fill="#65bd45" /><Cur /></Mini>
                <Mini><Dash /><path d="M6 3v1M3 8h1M9 8h1M6 10h1" stroke="#f33" strokeWidth="1.700" /><Cur /></Mini>
                <Mini><path d="M1 2l5 1 5-1 2 2v6l-5-1-3 1-4-3z" fill="#66b84a" stroke="#5f8850" strokeWidth=".8" /><path d="M4.500 3v6" stroke="#c9edbb" /></Mini>
                <Mini><path d="M1 2l4 2 4-2v8l-4 2-4-2z" stroke="#999" strokeDasharray="2 1" /><path d="M3 5h1M6 6h1M3 9h1M10 3h1M12 6h1M11 9h1" stroke="#f33" strokeWidth="1.700" /></Mini>
                <Mini><path d="M1 2l4 2 7-2M1 2v7l4 2V5M6 8l6-4M6 9l6 3" stroke="#568c45" strokeWidth="1.300" strokeDasharray="2 1" /><Cur /></Mini>
                <Mini><path d="M1 2l4 2 7-2M1 2v7l4 2V5M6 8l6-4M6 9l6 3" stroke="#777" strokeDasharray="2 1" /><path d="M3 5h1M6 6h1M3 9h1M10 3h1" stroke="#f33" strokeWidth="1.700" /><Cur /></Mini>
                <Mini><Dash c="#aaa" /><path d="M3 4h4v4H3z" fill="#9fcf90" stroke="#777" /><Cur /></Mini>
                <Mini><path d="M5.500 2l4.500 8H1z" fill="#65bd45" /><Cur /></Mini>
                <Mini><path d="M5 2v1.500M1 9h1.500" stroke="#f33" strokeWidth="1.700" /><path d="M5 3L2 8M5 3l4 5" stroke="#ccc" /><Cur /></Mini>
                <div className="w-[19px] flex items-center justify-center text-[12px] font-semibold text-[#5d5548]"><span className="text-[#f33]">·</span>?</div>
                <Mini><path d="M2.500 3h9v9c-2 1.500-7 1.500-9 0z" fill="#a9a9a9" /><ellipse cx="7" cy="3" rx="4.500" ry="1.800" fill="#c9c9c9" stroke="#999" strokeWidth=".7" /></Mini>
              </div>
              <div className="flex-1" />
              <div className="h-[22px] flex items-center text-[12px] font-bold underline tracking-[-0.38px] mr-3">RenderView1</div>
              <div className="flex gap-[3px] mr-[3px] mt-[3px]">
                <ViewBtn><svg width="9" height="9" fill="#fff" stroke="#000"><path d="M.500.500h8v8h-8zM4.500.500v8" /></svg></ViewBtn>
                <ViewBtn><svg width="9" height="9" fill="#fff" stroke="#000"><path d="M.500.500h8v8h-8zM.500 4.500h8" /></svg></ViewBtn>
                <ViewBtn><svg width="9" height="9" fill="none" stroke="#000"><path d="M.500.500h8v8h-8zM0 1h9" /></svg></ViewBtn>
                <ViewBtn><Restore /></ViewBtn>
                <ViewBtn><Close /></ViewBtn>
              </div>
            </div>
            <div className="relative w-[993px] h-[763px] border-2 border-[#0000ff] bg-white p-px">
              <svg width="987" height="757" viewBox="275 198 987 757" className="bg-[#52576e]" fill="none">
                <path d="M531 335L771 569V587L528 833.500 281 583z" fill="#cfccc4" shapeRendering="crispEdges" />
                <path d="M770.500 568l9 8.500-9 9-9.500-9z" fill="#cc0000" shapeRendering="crispEdges" />
                <g shapeRendering="crispEdges"><path d="M337 829L370 862" stroke="#f2f230" /><path d="M370 862L337 893" stroke="#e80010" /></g>
                <path d="M333 825l9.500 3.500-5.500 5.500z" fill="#e5dc00" stroke="#77710a" strokeWidth=".6" />
                <path d="M333 897.500l3.500-9.500 6 5z" fill="#e00000" stroke="#7a0000" strokeWidth=".6" />
                <circle cx="370.500" cy="864" r="3.600" fill="#00ff00" />
                <g fill="#fff" fontFamily="Inter" fontSize="13.500"><text x="342" y="831.500">Y</text><text x="342" y="890.500">X</text><text x="372" y="865">Z</text></g>
              </svg>
              <div className="absolute left-[794px] top-[392px] text-white font-['Lato',sans-serif] font-light text-[15px] leading-[18px]">
                <div className="tracking-[0.78px]">vtkBlockColors</div>
                <div className="mt-[17.500px]">
                  {legend.map((c, i) => (
                    <div key={c} className="h-[24.350px] flex items-start">
                      <span className="w-[33px] -mt-[4px] text-right text-[16px]">{i}</span>
                      <div className="w-2 h-px mt-2 ml-[2px]" style={{ background: c }} />
                      <div className="ml-0.5 w-[17px] h-4" style={{ background: c }} />
                    </div>
                  ))}
                </div>
              </div>
            </div>
          </div>
        </div>
      </div>

      <div className="flex-1 flex items-end">
        <div className="ml-[631px] w-[17px] h-[10px] bg-[#d0d0d0] border border-b-0 border-[#b8b8b8] flex justify-center overflow-hidden"><Svg s={12}><path d="M4 6l16 16M20 6L4 22" stroke="#aaa" strokeWidth="5" /></Svg></div>
        <div className="ml-px w-[615px] h-3 border border-b-0 border-[#bcbcbc] bg-[#e6e6e6]" />
      </div>
    </div>
  );
}
